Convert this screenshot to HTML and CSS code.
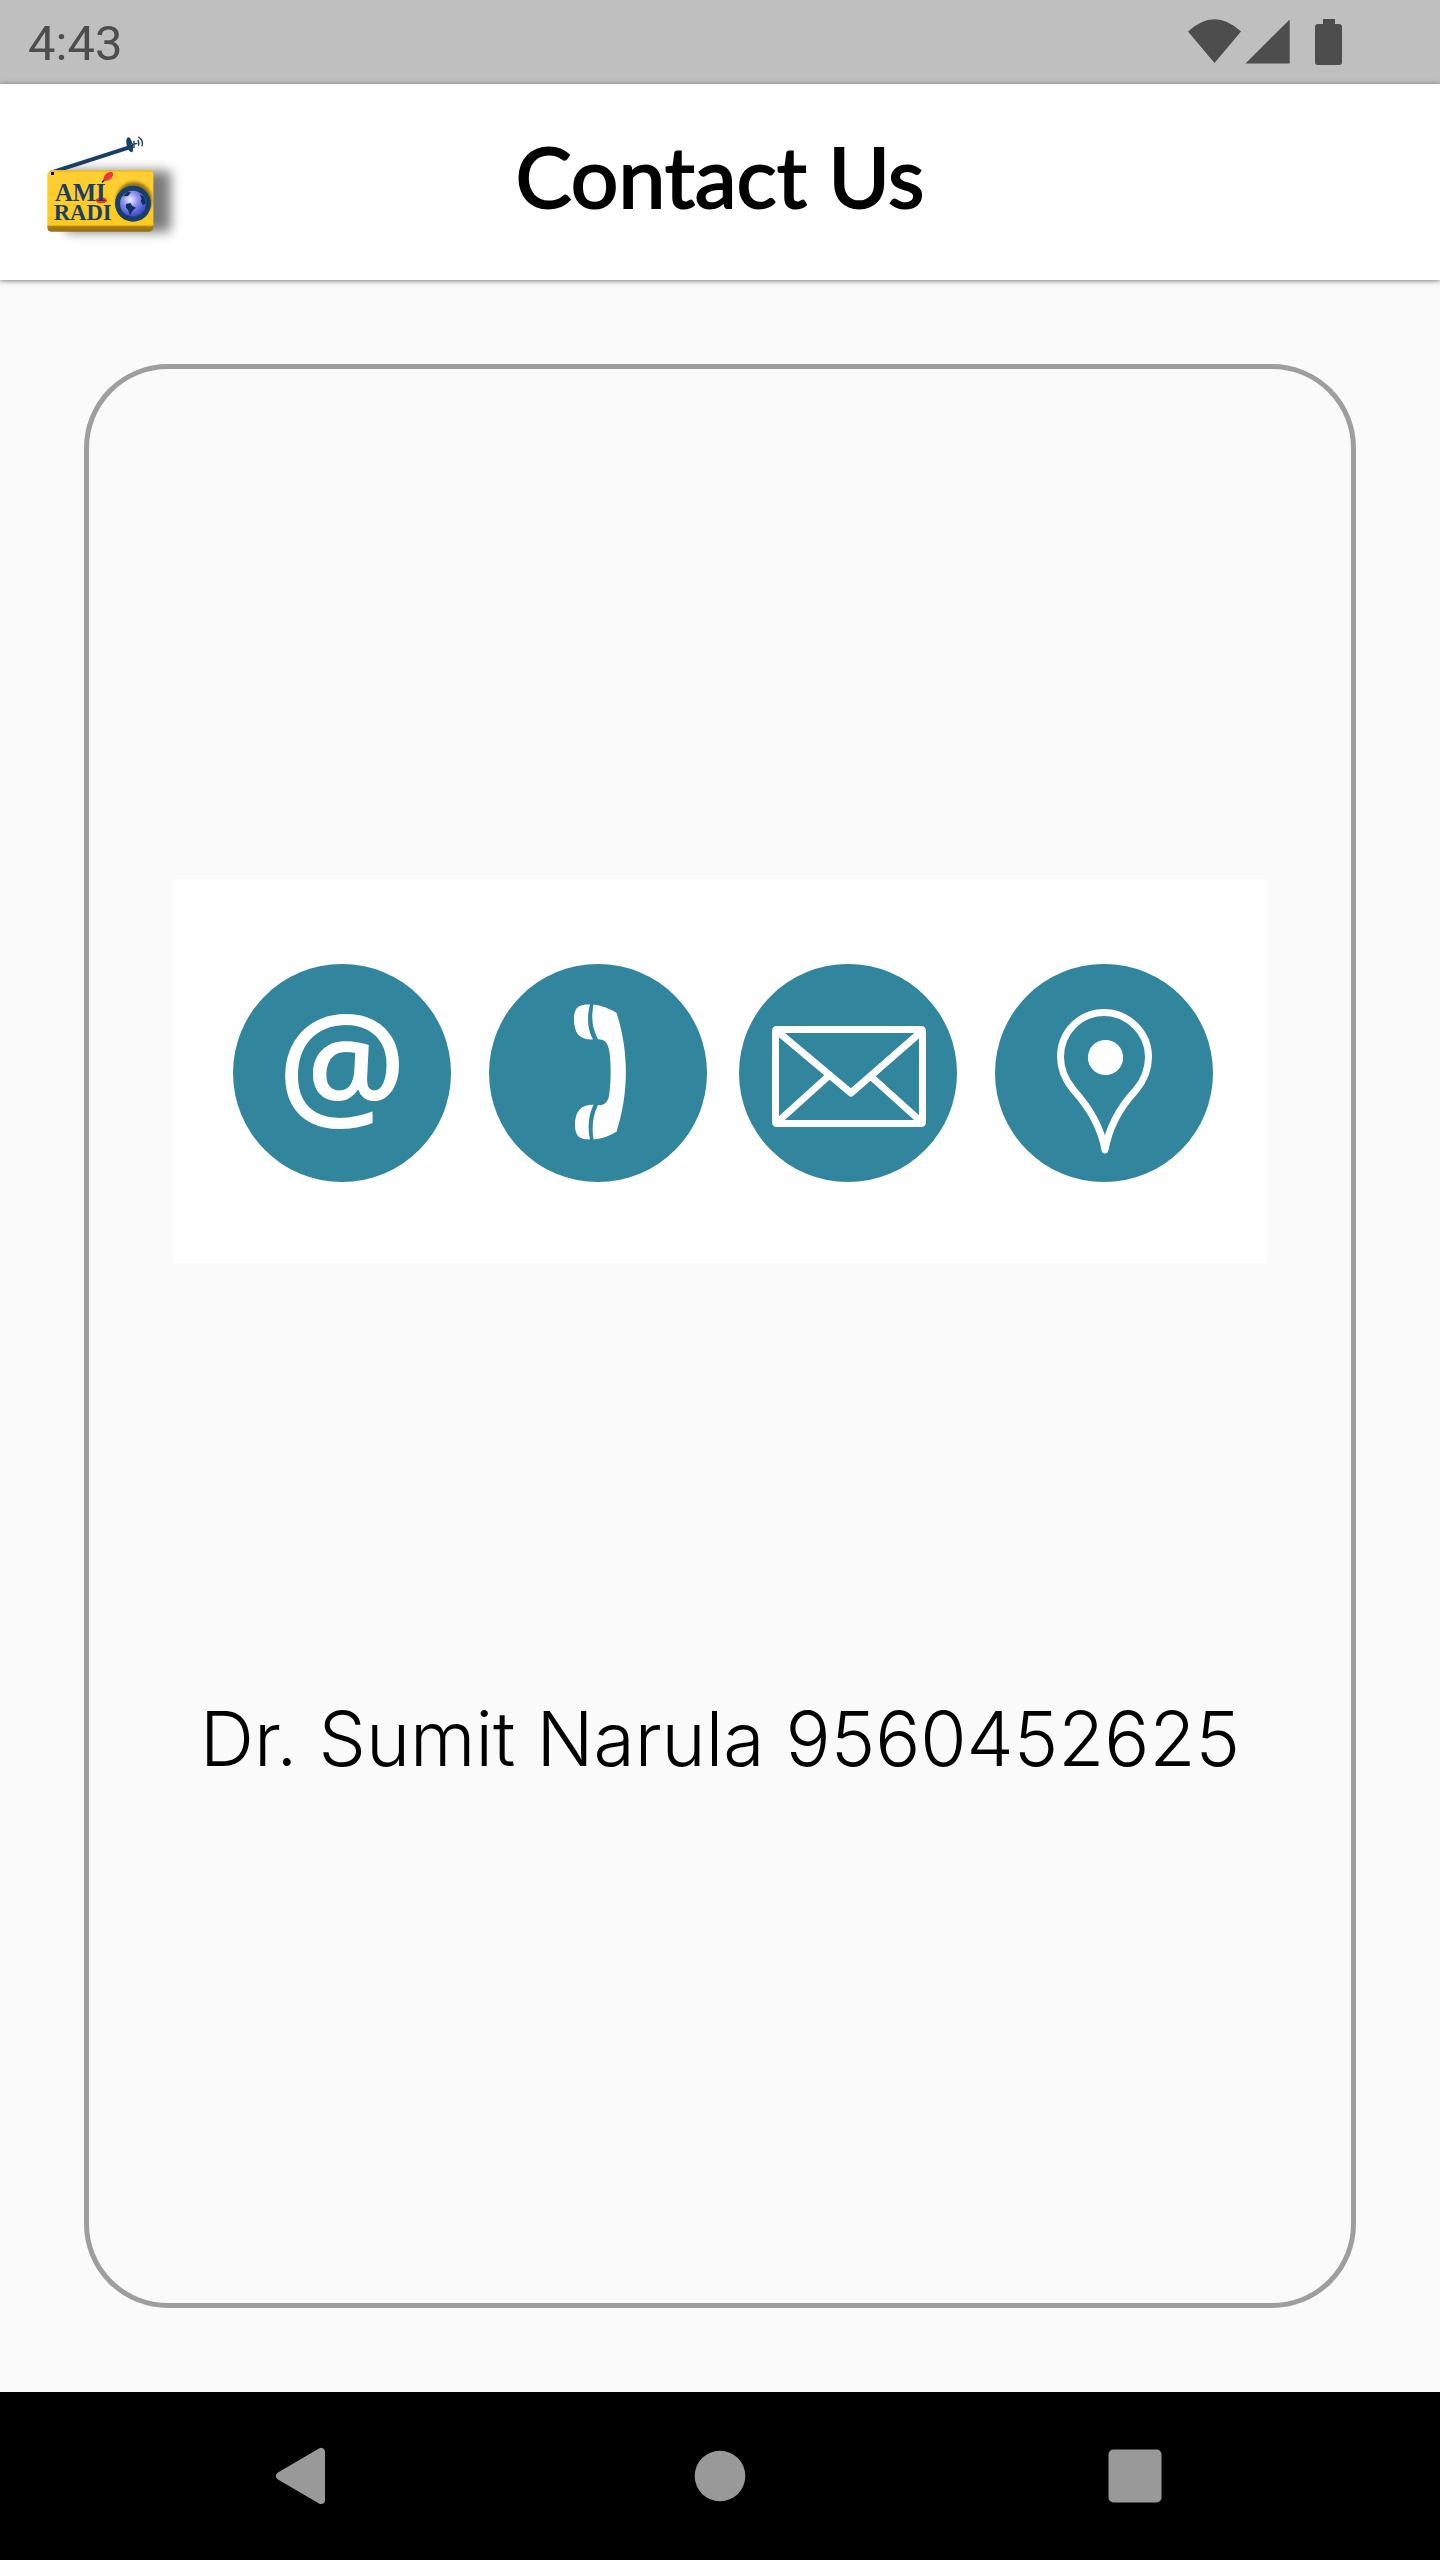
FILE: index.html
```html
<!DOCTYPE html>
<html lang="en">
<head>
<meta charset="utf-8">
<meta name="viewport" content="width=device-width, initial-scale=1">
<title>Contact Us</title>
<link rel="stylesheet" href="styles.css">
</head>
<body class="screen">

<div class="status-bar">
  <time class="clock">4:43</time>
  <svg class="status-icons" viewBox="0 0 156 48" aria-hidden="true">
    <path d="M0 13.500Q26.500 -11 53 13.500L26.500 45Z"/>
    <path d="M57.500 45.500H101.700V1.500Z"/>
    <path d="M135 1h12v5h4q3 0 3 3v35q0 3-3 3h-21q-3 0-3-3v-35q0-3 3-3h5z"/>
  </svg>
</div>

<header class="app-bar">
  <svg class="logo" viewBox="0 0 480 390" role="img" aria-label="AMI Radio">
    <defs>
      <linearGradient id="body" x1="0" y1="0" x2="0" y2="1">
        <stop offset="0" stop-color="#e6b526"/>
        <stop offset=".05" stop-color="#ffcf33"/>
        <stop offset=".89" stop-color="#ffca1f"/>
        <stop offset=".92" stop-color="#a87c12"/>
        <stop offset="1" stop-color="#94701a"/>
      </linearGradient>
      <radialGradient id="globe" cx=".4" cy=".35" r=".65">
        <stop offset="0" stop-color="#f0efff"/>
        <stop offset=".45" stop-color="#8c90ee"/>
        <stop offset="1" stop-color="#3a48c8"/>
      </radialGradient>
      <filter id="soft" x="-20%" y="-20%" width="140%" height="140%"><feGaussianBlur stdDeviation="17"/></filter>
      <filter id="glow" x="-30%" y="-30%" width="160%" height="160%"><feGaussianBlur stdDeviation="5"/></filter>
    </defs>
    <rect x="104" y="152" width="318" height="184" rx="14" fill="#000" opacity=".52" filter="url(#soft)"/>
    <path d="M72 155L298 82" stroke="#173f69" stroke-width="12" fill="none"/>
    <ellipse cx="300" cy="74" rx="10" ry="23" transform="rotate(-14 300 74)" fill="#173f69"/>
    <path d="M302 56Q316 76 310 92M303 74L322 70" stroke="#fff" stroke-width="3" fill="none"/>
    <path d="M304 74L322 70M312 62V84M323 60Q329 68 325 77M325 50Q343 63 335 79" stroke="#173f69" stroke-width="4" fill="none"/>
    <path d="M62 150H358Q370 150 370 163V322Q370 335 358 335H64Q52 335 52 322V162Z" fill="url(#body)"/>
    <rect x="63" y="156" width="9" height="9" fill="#000"/>
    <ellipse cx="214" cy="241" rx="17" ry="9" fill="#ee3b32"/>
    <path d="M216 187L228 175" stroke="#173f69" stroke-width="5"/>
    <ellipse cx="235" cy="169" rx="17" ry="10" transform="rotate(-42 235 169)" fill="#f5333a"/>
    <text class="logo-text" x="75" y="243" font-size="74">AMI</text>
    <text class="logo-text" x="71" y="300" font-size="68">RADI</text>
    <circle cx="312" cy="240" r="54" fill="#6b5510" opacity=".75" filter="url(#glow)"/>
    <circle cx="309" cy="251" r="54" fill="#173f69"/>
    <circle cx="309" cy="251" r="39" fill="url(#globe)"/>
    <path d="M288 252L301 249L307 258L318 263L308 272L300 286L294 270L287 262ZM330 222L343 232L347 250L338 255L332 244L335 236ZM278 229L292 216L303 217L294 228Z" fill="#102f63"/>
  </svg>
  <h1 class="title">Contact Us</h1>
</header>

<main class="content">
  <section class="card">
    <svg class="banner" viewBox="0 0 1094 384" role="img" aria-label="Email, phone, mail and location">
      <rect width="1094" height="384" fill="#fff"/>
      <g fill="#31859d">
        <circle cx="169" cy="194" r="109"/>
        <circle cx="425" cy="194" r="109"/>
        <circle cx="675" cy="194" r="109"/>
        <circle cx="931" cy="194" r="109"/>
      </g>
      <text class="at-sign" x="169" y="238" text-anchor="middle">@</text>
      <g fill="#fff">
        <path d="M417 125.500C406 125.500 401 128 401 140C401 155 407 161 420 160.500C414 150 414 137 417 125.500Z"/>
        <path d="M420.500 125.500C430 127 436 129.500 443.500 133.700C456 172 456 214 443.500 252.700C436 257 430 259.500 420.500 260.500C418.500 247 420 236 425 226C432 227 436 222 436.500 213C438 200 438 185 436.500 173C435 163 431 160 425 160.300C419 149 418 138 420.500 125.500Z"/>
        <path d="M417 260.500C407 260.500 402 258 402 246C402 232 408 225.500 420.500 225.700C415.500 236 414.500 248 417 260.500Z"/>
      </g>
      <g fill="none" stroke="#fff" stroke-width="7" stroke-linejoin="round">
        <rect x="602.500" y="150.500" width="147" height="94" rx="1"/>
        <path d="M604 152L678 214L749 152M604 243.500L655 197.500M699 198.500L749 243.500"/>
        <path d="M931 133.500C906.700 133.500 887.500 153.500 887.500 178C887.500 192 893 202 900.500 211C915 227 928 248 932 271C936 248 948 227 963 211C970.500 202 975.500 192 975.500 178C975.500 153.500 955 133.500 931 133.500Z"/>
      </g>
      <circle cx="932.500" cy="178.500" r="17.600" fill="#fff"/>
    </svg>
    <p class="contact">Dr. Sumit Narula 9560452625</p>
  </section>
</main>

<nav class="nav-bar" aria-label="System navigation">
  <button class="nav-button" type="button" aria-label="Back">
    <svg class="nav-icon" viewBox="0 0 72 72" aria-hidden="true"><path d="M11 36L52 12V60Z" stroke="#999" stroke-width="8" stroke-linejoin="round"/></svg>
  </button>
  <button class="nav-button" type="button" aria-label="Home">
    <svg class="nav-icon" viewBox="0 0 72 72" aria-hidden="true"><circle cx="36" cy="36" r="25.300"/></svg>
  </button>
  <button class="nav-button" type="button" aria-label="Recent apps">
    <svg class="nav-icon" viewBox="0 0 72 72" aria-hidden="true"><rect x="9.500" y="9.500" width="53" height="53" rx="5"/></svg>
  </button>
</nav>

</body>
</html>
```
FILE: styles.css
```css
* {
  box-sizing: border-box;
}

.screen {
  display: flex;
  flex-direction: column;
  min-height: 100vh;
  margin: 0;
  background: #fafafa;
  color: #000;
  font-family: Inter, "Noto Sans", sans-serif;
}

.status-bar {
  display: flex;
  align-items: center;
  justify-content: space-between;
  height: 84px;
  padding: 0 96px 0 28px;
  background: #bfbfbf;
  color: #4d4d4d;
}

.clock {
  padding-top: 4px;
  font: 400 49px/80px Roboto, sans-serif;
}

.status-icons {
  width: 156px;
  height: 48px;
  fill: #4d4d4d;
}

.app-bar {
  display: grid;
  grid-template-columns: 1fr auto 1fr;
  align-items: center;
  height: 196px;
  padding: 0 30px;
  background: #fff;
  box-shadow: 0 1px 5px rgba(0, 0, 0, 0.5);
}

.logo {
  width: 160px;
  height: 130px;
  margin-top: 6px;
}

.logo-text {
  font-family: "Liberation Serif", serif;
  font-weight: 700;
  fill: #173f69;
}

.title {
  margin: 0;
  padding-bottom: 12px;
  font: 400 84px/104px Lato, sans-serif;
  -webkit-text-stroke: 2px #000;
}

.content {
  display: flex;
  flex: 1;
  padding: 84px;
}

.card {
  display: flex;
  flex: 1;
  flex-direction: column;
  align-items: center;
  justify-content: space-evenly;
  padding: 84px;
  border: 5px solid #9e9e9e;
  border-radius: 84px;
}

.banner {
  width: 100%;
}

.at-sign {
  font: 600 144px "Open Sans", sans-serif;
  fill: #fff;
}

.contact {
  margin: 0;
  padding-bottom: 4px;
  font-size: 75px;
  font-weight: 300;
  line-height: 100px;
  text-align: center;
}

.nav-bar {
  display: grid;
  grid-template-columns: repeat(3, 1fr);
  height: 168px;
  padding: 0 98px;
  background: #000;
}

.nav-button {
  display: flex;
  align-items: center;
  justify-content: center;
  padding: 0;
  border: 0;
  background: none;
}

.nav-icon {
  width: 72px;
  height: 72px;
  fill: #999;
}
```
